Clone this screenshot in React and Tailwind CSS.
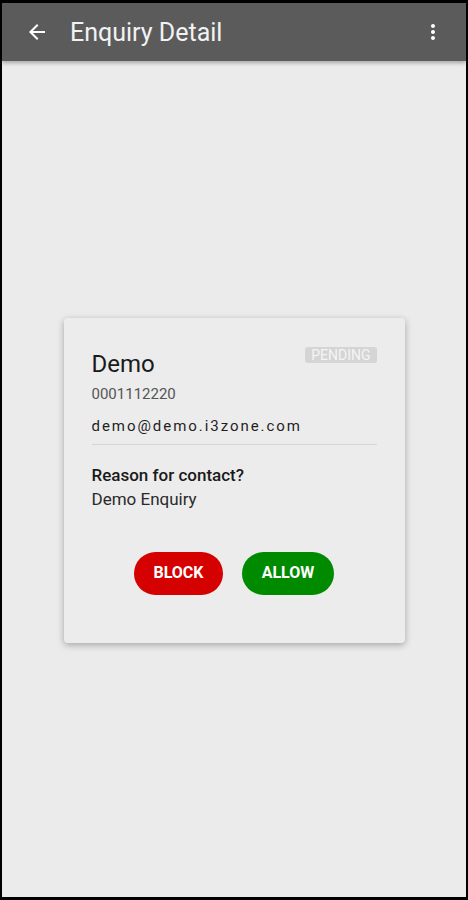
import React from 'react';

const ArrowBack = () => (
    <svg width="24" height="24" viewBox="0 0 24 24" fill="none">
        <path d="M20 11H7.83l5.59-5.59L12 4l-8 8 8 8 1.41-1.41L7.83 13H20v-2z" fill="#ffffff" />
    </svg>
);

const MoreVert = () => (
    <svg width="24" height="24" viewBox="0 0 24 24" fill="none">
        <path d="M12 8c1.1 0 2-.9 2-2s-.9-2-2-2-2 .9-2 2 .9 2 2 2zm0 2c-1.1 0-2 .9-2 2s.9 2 2 2 2-.9 2-2-.9-2-2-2zm0 6c-1.1 0-2 .9-2 2s.9 2 2 2 2-.9 2-2-.9-2-2-2z" fill="#ffffff" />
    </svg>
);

export default function App() {
    return (
        <div className="h-[900px] w-[468px] bg-black pt-[3px] px-[2px] pb-[3px] font-['Roboto','Liberation_Sans',sans-serif]">
            <div className="flex h-full flex-col bg-[#ebebeb]">
                {/* App bar */}
                <header className="relative z-10 flex h-[58px] shrink-0 items-center bg-[#5b5b5b] pl-[23px] pr-[21px] shadow-[0_2px_4px_rgba(0,0,0,0.3)]">
                    <ArrowBack />
                    <h1 className="ml-[21px] text-[25px] leading-none text-[#f2f2f2]">Enquiry Detail</h1>
                    <div className="ml-auto">
                        <MoreVert />
                    </div>
                </header>

                {/* Content */}
                <main className="flex flex-1 items-center justify-center pt-[2px]">
                    <div className="w-[341px] rounded-[4px] bg-[#ececec] px-[28px] pt-[31px] pb-[48px] shadow-[0_2px_7px_rgba(0,0,0,0.3)]">
                        <div className="flex items-start justify-between">
                            <h2 className="text-[24px] leading-[30px] text-[#1a1a1a]">Demo</h2>
                            <span className="-mt-[2px] rounded-[3px] bg-[#d5d5d5] px-[6px] text-[14px] leading-[16px] text-[#f4f4f4]">PENDING</span>
                        </div>
                        <p className="mt-[5px] text-[15px] leading-[20px] text-[#555555]">0001112220</p>
                        <p className="mt-[12px] text-[15px] leading-[20px] tracking-[0.13em] text-[#1f1f1f]">demo@demo.i3zone.com</p>
                        <div className="mt-[8px] h-px bg-[#d6d6d6]" />
                        <p className="mt-[19px] text-[17px] font-medium leading-[22px] text-[#1a1a1a]">Reason for contact?</p>
                        <p className="mt-[2px] text-[17px] leading-[22px] text-[#2a2a2a]">Demo Enquiry</p>
                        <div className="mt-[42px] flex justify-center gap-[19px]">
                            <button className="h-[43px] w-[89px] rounded-full bg-[#d50000] text-[16px] font-bold text-white">BLOCK</button>
                            <button className="h-[43px] w-[92px] rounded-full bg-[#008a00] text-[16px] font-bold text-white">ALLOW</button>
                        </div>
                    </div>
                </main>
            </div>
        </div>
    );
}
